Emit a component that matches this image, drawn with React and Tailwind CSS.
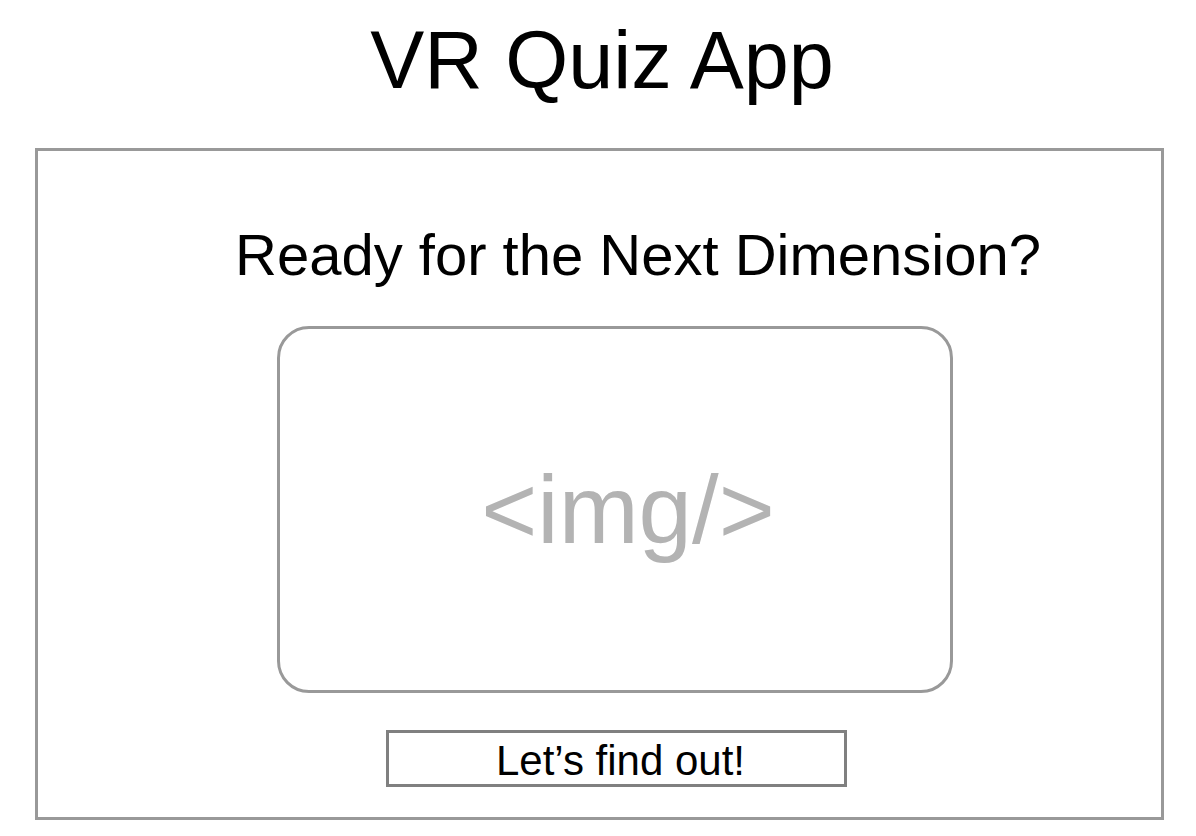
import React from "react";

const App = () => {
  return (
    <div
      className="min-h-screen w-full bg-white text-black pt-[20px]"
      style={{ fontFamily: '"Liberation Sans", Arial, sans-serif' }}
    >
      {/* title */}
      <h1 className="text-center text-[81px] leading-[81px] pl-[8px]">VR Quiz App</h1>

      {/* main frame */}
      <div className="mt-[47px] ml-[35px] w-[1129px] border-[3px] border-[#999999] pt-[75px] pb-[30px] flex flex-col">
        <h2 className="ml-[197px] text-[58px] leading-[58px]">
          Ready for the Next Dimension?
        </h2>

        {/* image placeholder */}
        <div className="mt-[42px] ml-[239px] w-[676px] h-[367px] border-[3px] border-[#999999] rounded-[32px] flex items-center justify-center pl-[26px]">
          <span className="text-[96px] leading-[96px] text-[#b3b3b3]">&lt;img/&gt;</span>
        </div>

        {/* CTA */}
        <button className="mt-[37px] ml-[348px] w-[461px] h-[57px] border-[3px] border-[#808080] flex items-center justify-center pt-[4px] pl-[8px] text-[42px] leading-[42px] text-black">
          Let’s find out!
        </button>
      </div>
    </div>
  );
};

export default App;
